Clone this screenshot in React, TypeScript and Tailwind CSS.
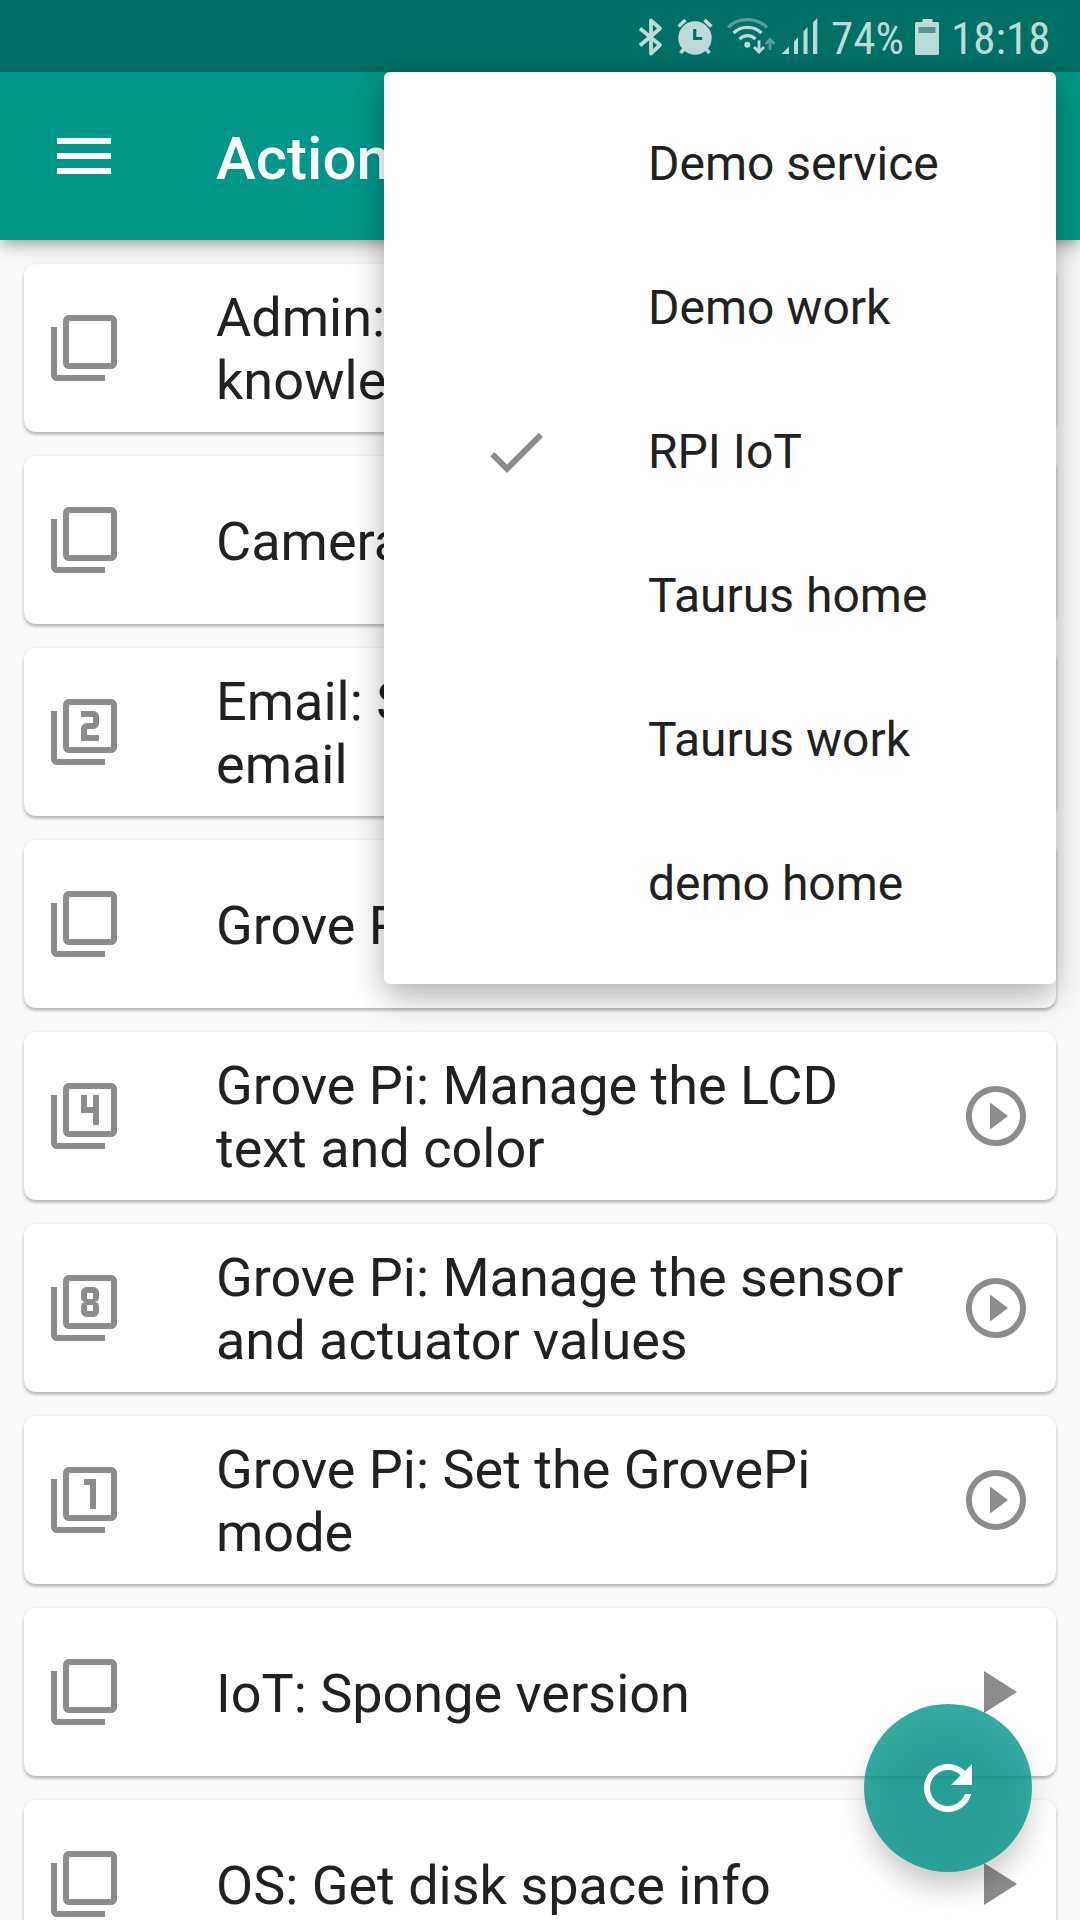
import type { ReactNode } from "react";

type Trailing = "none" | "circle" | "arrow";
type Badge = "none" | "1" | "2" | "4" | "8";

interface Action {
  lines: string[];
  badge: Badge;
  trailing: Trailing;
}

const actions: Action[] = [
  { lines: ["Admin: Reload", "knowledge"], badge: "none", trailing: "none" },
  { lines: ["Camera"], badge: "none", trailing: "none" },
  { lines: ["Email: Send", "email"], badge: "2", trailing: "none" },
  { lines: ["Grove Pi"], badge: "none", trailing: "none" },
  { lines: ["Grove Pi: Manage the LCD", "text and color"], badge: "4", trailing: "circle" },
  { lines: ["Grove Pi: Manage the sensor", "and actuator values"], badge: "8", trailing: "circle" },
  { lines: ["Grove Pi: Set the GrovePi", "mode"], badge: "1", trailing: "circle" },
  { lines: ["IoT: Sponge version"], badge: "none", trailing: "arrow" },
  { lines: ["OS: Get disk space info"], badge: "none", trailing: "arrow" },
];

const services = ["Demo service", "Demo work", "RPI IoT", "Taurus home", "Taurus work", "demo home"];

const badgePaths: Record<Badge, string> = {
  none: "",
  "1": "M14 15h2V5h-4v2h2v8z",
  "2": "M17 13h-4v-2h2c1.1 0 2-.89 2-2V7c0-1.11-.9-2-2-2h-4v2h4v2h-2c-1.1 0-2 .89-2 2v4h6v-2z",
  "4": "M15 15h2V5h-2v4h-2V5h-2v6h4v4z",
  "8": "M13 15h2c1.1 0 2-.89 2-2v-1.5c0-.83-.67-1.5-1.5-1.5.83 0 1.5-.67 1.5-1.5V7c0-1.11-.9-2-2-2h-2c-1.1 0-2 .89-2 2v1.5c0 .83.67 1.5 1.5 1.5-.83 0-1.5.67-1.5 1.5V13c0 1.11.9 2 2 2zm0-8h2v2h-2V7zm0 4h2v2h-2v-2z",
};

function Icon({ children, className = "" }: { children: ReactNode; className?: string }) {
  return (
    <svg viewBox="0 0 24 24" className={`size-[72px] shrink-0 fill-current ${className}`}>
      {children}
    </svg>
  );
}

function StatusBar() {
  return (
    <div className="flex h-[72px] items-start bg-[#007065] pl-[636px] text-[#bcdbd8]">
      <svg viewBox="636 0 28 72" className="h-[72px] w-7 shrink-0" fill="none" stroke="currentColor" strokeWidth="3.8">
        <path d="M640 28.500L660 45L651 53.500V20.500L660 28.500L640 45.500" strokeLinejoin="round" />
      </svg>
      <svg viewBox="676 0 38 72" className="ml-3 h-[72px] w-[38px] shrink-0">
        <circle cx="695" cy="38" r="16.700" fill="currentColor" />
        <path d="M678.500 26.500L685.500 20M704.500 20L711.500 26.500M684 49L680.500 53M706 49L709.500 53" stroke="currentColor" strokeWidth="3.600" />
        <path d="M694.700 29v9.500h7.500" fill="none" stroke="#007065" strokeWidth="3.200" />
      </svg>
      <svg viewBox="726 0 50 72" className="ml-3 h-[72px] w-[50px] shrink-0" fill="none" stroke="currentColor" strokeWidth="3.200">
        <path d="M728 27.500C738 17 757 17 767 27.500" opacity=".45" />
        <path d="M733.500 33C741 25.500 754 25.500 761.500 33M739.500 39C744 34.500 751 34.500 755.500 39" />
        <circle cx="747.300" cy="44.700" r="3" fill="currentColor" stroke="none" />
        <path d="M759 40.500V52M754 47L759 52L764 47" strokeWidth="2.800" />
        <path d="M770 50V39.500M765.500 44L770 39.500L774.500 44" strokeWidth="2.800" opacity=".45" />
      </svg>
      <svg viewBox="780 0 38 72" className="ml-1 h-[72px] w-[38px] shrink-0 fill-current">
        <path d="M781.500 54L789 46.500V54zM794 41.500L798 37.500V54H794zM803.500 31.500L807.500 27V54H803.500zM813 22.500L817.300 18V54H813z" />
      </svg>
      <span className="ml-[13px] mt-3 w-[83px] text-[45px] leading-[54px] [font-stretch:75%]">74%</span>
      <svg viewBox="914 0 26 72" className="h-[72px] w-[26px] shrink-0">
        <path d="M922.500 19h10v3h5q1.500 0 1.500 1.500v30q0 1.500-1.500 1.500h-21q-1.500 0-1.500-1.500v-30q0-1.500 1.500-1.500h6z" fill="currentColor" />
        <rect x="918.500" y="27" width="17" height="6" fill="#4d9a93" />
      </svg>
      <span className="ml-[11px] mt-3 text-[45px] leading-[54px] [font-stretch:75%]">18:18</span>
    </div>
  );
}

function ActionCard({ lines, badge, trailing }: Action) {
  return (
    <li className="flex h-[168px] shrink-0 items-center rounded-xl bg-white px-6 shadow-[0_3px_3px_rgba(0,0,0,0.18),0_1px_4px_rgba(0,0,0,0.14)]">
      <Icon className="text-[#8c8c8c]">
        <path d="M3 5H1v16c0 1.100.9 2 2 2h16v-2H3V5zm18-4H7c-1.100 0-2 .9-2 2v14c0 1.100.9 2 2 2h14c1.100 0 2-.9 2-2V3c0-1.100-.9-2-2-2zm0 16H7V3h14v14z" />
        <path d={badgePaths[badge]} />
      </Icon>
      <div className="ml-24 flex-1 whitespace-nowrap pt-0.5 text-[54px] leading-[63px] text-[#212121]">
        {lines.map((line) => (
          <div key={line}>{line}</div>
        ))}
      </div>
      {trailing !== "none" && (
        <Icon className="text-[#8c8c8c]">
          {trailing === "circle" ? (
            <path d="M10 16.500l6-4.500-6-4.500v9zM12 2C6.480 2 2 6.480 2 12s4.480 10 10 10 10-4.480 10-10S17.520 2 12 2zm0 18c-4.410 0-8-3.590-8-8s3.590-8 8-8 8 3.590 8 8-3.590 8-8 8z" />
          ) : (
            <path d="M8 5v14l11-7z" />
          )}
        </Icon>
      )}
    </li>
  );
}

function ServiceMenu() {
  return (
    <div className="absolute left-[384px] top-[72px] w-[672px] rounded-md bg-white py-6 shadow-[0_12px_24px_-6px_rgba(0,0,0,0.1),0_18px_36px_rgba(0,0,0,0.14),0_6px_36px_rgba(0,0,0,0.12)]">
      {services.map((name) => (
        <div key={name} className="flex h-36 items-center pb-2 pl-24">
          <div className="w-[168px]">
            {name === "RPI IoT" && (
              <Icon className="text-[#8c8c8c]">
                <path d="M9 16.200L4.800 12l-1.400 1.400L9 19 21 7l-1.400-1.400L9 16.200z" />
              </Icon>
            )}
          </div>
          <span className="whitespace-nowrap text-[48px] leading-[56px] text-[#212121]">{name}</span>
        </div>
      ))}
    </div>
  );
}

export default function App() {
  return (
    <div className="relative flex h-[1920px] w-[1080px] flex-col overflow-hidden bg-[#fafafa] font-['Roboto',sans-serif]">
      <StatusBar />
      <header className="z-10 flex h-[168px] shrink-0 items-center bg-[#009688] pl-12 text-white shadow-[0_6px_12px_-3px_rgba(0,0,0,0.2),0_9px_18px_rgba(0,0,0,0.14),0_3px_18px_rgba(0,0,0,0.06)]">
        <Icon>
          <path d="M3 18h18v-2H3v2zm0-5h18v-2H3v2zm0-7v2h18V6H3z" />
        </Icon>
        <h1 className="ml-24 pt-[5px] text-[60px] font-medium leading-[70px]">Actions</h1>
      </header>
      <ul className="flex flex-col gap-6 px-6 pt-6">
        {actions.map((action) => (
          <ActionCard key={action.lines[0]} {...action} />
        ))}
      </ul>
      <div className="absolute inset-0 z-20">
        <ServiceMenu />
      </div>
      <button className="absolute bottom-12 right-12 z-20 flex size-[168px] items-center justify-center rounded-full text-white">
        <span className="absolute inset-x-[3px] bottom-[-15px] top-[21px] rounded-full bg-black/22 blur-[14px]" />
        <span className="absolute inset-0 rounded-full bg-[#009688]/80" />
        <Icon className="relative">
          <path d="M17.650 6.350C16.200 4.900 14.210 4 12 4c-4.420 0-7.990 3.580-7.990 8s3.570 8 7.990 8c3.730 0 6.840-2.550 7.730-6h-2.080c-.82 2.330-3.040 4-5.650 4-3.310 0-6-2.690-6-6s2.690-6 6-6c1.660 0 3.140.69 4.220 1.780L13 11h7V4l-2.350 2.350z" />
        </Icon>
      </button>
    </div>
  );
}
